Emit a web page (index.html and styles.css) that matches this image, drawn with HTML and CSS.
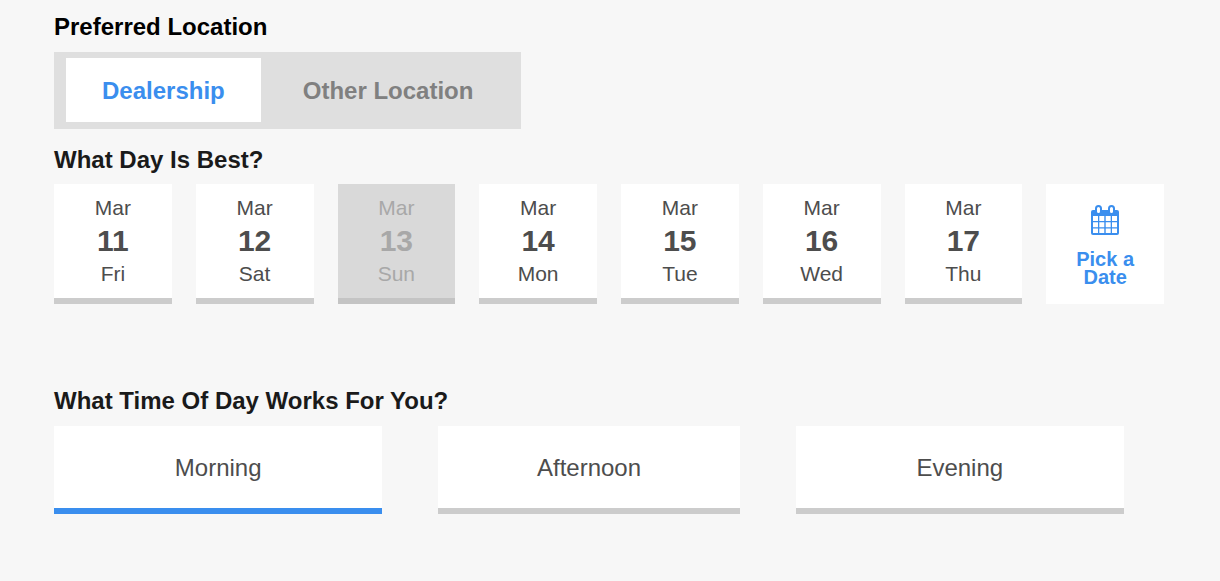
FILE: index.html
```
<!DOCTYPE html>
<html lang="en">
  <head>
    <meta charset="utf-8" />
    <title>Schedule a Test Drive</title>
    <link rel="stylesheet" href="styles.css">
  </head>
  <body>
    <form class="schedule">
      <section class="location">
        <h2>Preferred Location</h2>
        <div class="toggle">
          <button type="button" class="active">Dealership</button>
          <button type="button">Other Location</button>
        </div>
      </section>

      <section class="day">
        <h2>What Day Is Best?</h2>
        <div class="day-list">
          <button type="button" class="card">
            <span>Mar</span>
            <strong>11</strong>
            <span>Fri</span>
          </button>
          <button type="button" class="card">
            <span>Mar</span>
            <strong>12</strong>
            <span>Sat</span>
          </button>
          <button type="button" class="card" disabled>
            <span>Mar</span>
            <strong>13</strong>
            <span>Sun</span>
          </button>
          <button type="button" class="card">
            <span>Mar</span>
            <strong>14</strong>
            <span>Mon</span>
          </button>
          <button type="button" class="card">
            <span>Mar</span>
            <strong>15</strong>
            <span>Tue</span>
          </button>
          <button type="button" class="card">
            <span>Mar</span>
            <strong>16</strong>
            <span>Wed</span>
          </button>
          <button type="button" class="card">
            <span>Mar</span>
            <strong>17</strong>
            <span>Thu</span>
          </button>
          <button type="button" class="card pick-date">
            <svg width="28" height="30" viewBox="0 0 28 30" aria-hidden="true">
              <rect y="5" width="28" height="25" rx="2" fill="#3a8eee" />
              <path fill="#fff" d="M2 11h5v5H2zM8.300 11h5v5h-5zM14.700 11h5v5h-5zM21 11h5v5h-5zM2 17.200h5v5H2zM8.300 17.200h5v5h-5zM14.700 17.200h5v5h-5zM21 17.200h5v5h-5zM2 23.400h5v4.600H2zM8.300 23.400h5v4.600h-5zM14.700 23.400h5v4.600h-5zM21 23.400h5v4.600h-5z" />
              <g fill="#fff" stroke="#3a8eee" stroke-width="2">
                <rect x="5" y="1" width="5" height="8" rx="2.500" />
                <rect x="18" y="1" width="5" height="8" rx="2.500" />
              </g>
            </svg>
            <span>Pick a Date</span>
          </button>
        </div>
      </section>

      <section class="time">
        <h2>What Time Of Day Works For You?</h2>
        <div class="time-list">
          <button type="button" class="card active">Morning</button>
          <button type="button" class="card">Afternoon</button>
          <button type="button" class="card">Evening</button>
        </div>
      </section>
    </form>
  </body>
</html>
```
FILE: styles.css
```
* {
  box-sizing: border-box;
}

body {
  margin: 0;
  background-color: #f7f7f7;
  font-family: "Liberation Sans", Arial, sans-serif;
  color: #1a1a1a;
}

.schedule {
  padding: 13px 56px 40px 54px;
}

h2 {
  margin: 0 0 10px;
  font-size: 24px;
  line-height: 28px;
}

button {
  border: none;
  font-family: inherit;
  font-size: 24px;
  line-height: 28px;
  cursor: pointer;
}

/* Location */
.location h2 {
  margin-bottom: 11px;
  color: #000;
}

.toggle {
  display: inline-flex;
  gap: 6px;
  padding: 6px 12px 7px;
  background-color: #dfdfdf;
  vertical-align: top;
}

.toggle button {
  padding: 19px 36px 17px;
  background-color: transparent;
  color: #808080;
  font-weight: bold;
}

.toggle .active {
  background-color: #fff;
  color: #3a8eee;
}

/* Cards */
.card {
  padding: 12px;
  border-bottom: 6px solid #ccc;
  background-color: #fff;
  color: #4d4d4d;
}

.card.active {
  border-bottom-color: #3a8eee;
}

.card:disabled {
  border-bottom-color: #c4c4c4;
  background-color: #d9d9d9;
  color: #a8a8a8;
  cursor: default;
}

/* Day */
.day {
  margin-top: 17px;
}

.day-list {
  display: grid;
  grid-template-columns: repeat(8, 1fr);
  gap: 24px;
}

.day-list .card {
  display: flex;
  flex-direction: column;
  align-items: center;
  font-size: 21px;
  line-height: 24px;
}

.day-list strong {
  font-size: 30px;
  line-height: 42px;
}

.day-list .pick-date {
  gap: 15px;
  padding: 21px 24px 12px;
  border-bottom-color: #fff;
  color: #3a8eee;
  font-size: 20px;
  font-weight: bold;
  line-height: 18px;
}

/* Time of day */
.time {
  margin-top: 83px;
}

.time h2 {
  margin-bottom: 11px;
}

.time-list {
  display: grid;
  grid-template-columns: 12fr 11fr 12fr;
  gap: 56px;
  margin-right: 40px;
}

.time-list .card {
  padding: 28px 12px 26px;
}

@media screen and (max-width: 900px) {
  .schedule {
    padding: 13px 20px;
  }

  .day-list {
    grid-template-columns: repeat(4, 1fr);
  }

  .time-list {
    gap: 20px;
    margin-right: 0;
  }
}
```
